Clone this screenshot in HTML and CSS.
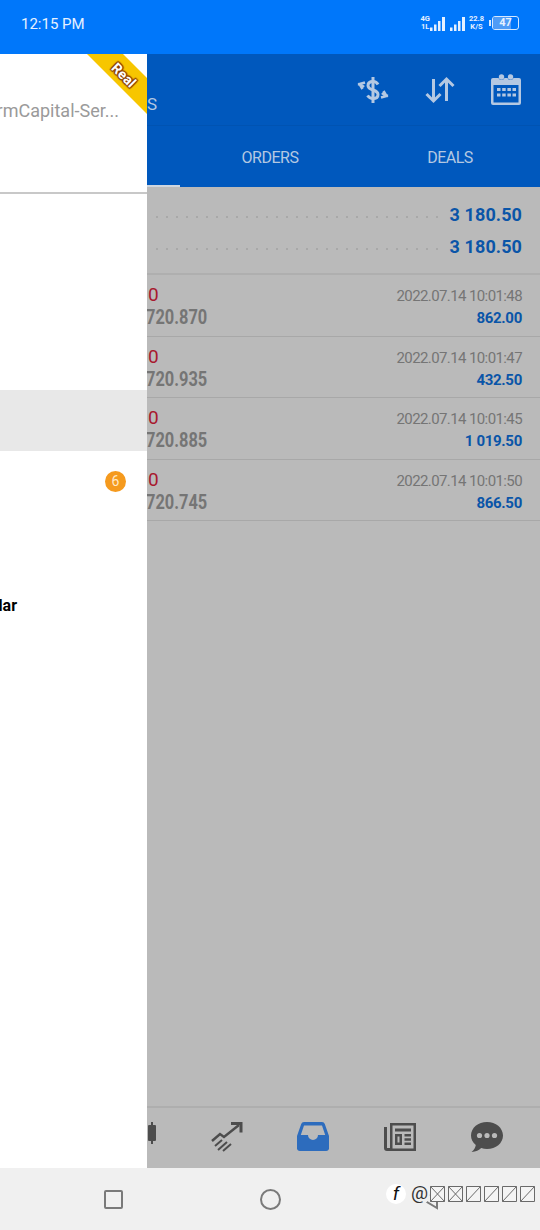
FILE: index.html
```html
<!DOCTYPE html>
<html lang="en">
<head>
    <meta charset="UTF-8">
    <meta name="viewport" content="width=device-width, initial-scale=1.0">
    <title>History</title>
    <link rel="stylesheet" href="styles.css">
</head>
<body>
    <div class="status-bar">
        <span class="clock">12:15 PM</span>
        <div class="status-icons">
            <div class="net-label"><span>4G</span><span>1L</span></div>
            <svg class="signal" width="15" height="15" viewBox="0 0 15 15"><path d="M0 11.500h2.500V15H0zM4 8.500h2.500V15H4zM8 5h2.500v10H8zM12 1h3v14h-3z"/></svg>
            <svg class="signal second" width="15" height="15" viewBox="0 0 15 15"><path d="M0 11.500h2.500V15H0zM4 8.500h2.500V15H4zM8 5h2.500v10H8zM12 1h3v14h-3z"/></svg>
            <div class="speed"><span>22.8</span><span>K/S</span></div>
            <span class="battery-nub"></span>
            <div class="battery"><span class="battery-fill"></span><span class="battery-text">47</span></div>
        </div>
    </div>

    <div class="screen">
        <!-- main page, the drawer lies over its left part -->
        <header class="app-header">
            <div class="toolbar">
                <span class="title">s</span>
                <div class="toolbar-icons">
                    <svg width="34" height="34" viewBox="0 0 34 34" fill="none" stroke="currentColor" stroke-width="3">
                        <path d="M22 11.500c-1-2-3-3-5-3-3 0-5 1.500-5 4s2 3.500 5 4.500 5 2 5 4.500-2 4-5 4-4.500-1.500-5.500-3"/>
                        <path d="M17 4v26"/>
                        <path d="M9 9.500 3.500 11l3 5M2 11c2 .500 4 1 6 3" stroke-width="2.500"/>
                        <path d="M25 24.500l5.500-1.500-3-5M32 23c-2-.500-4-1-6-3" stroke-width="2.500"/>
                    </svg>
                    <svg width="32" height="32" viewBox="0 0 32 32" fill="none" stroke="currentColor" stroke-width="3">
                        <path d="M9.500 5v22M2.500 20l7 7 7-7"/>
                        <path d="M22.500 27V5M15.500 12l7-7 7 7"/>
                    </svg>
                    <svg width="32" height="32" viewBox="0 0 32 32">
                        <path fill="currentColor" fill-rule="evenodd" d="M3 4h5.500a3.200 3.200 0 0 0 6 0h3a3.200 3.200 0 0 0 6 0H29a2 2 0 0 1 2 2v23a2 2 0 0 1-2 2H3a2 2 0 0 1-2-2V6a2 2 0 0 1 2-2zM3.500 11v17.500h25V11z"/>
                        <circle cx="11.500" cy="3" r="2.700" fill="currentColor"/>
                        <circle cx="20.500" cy="3" r="2.700" fill="currentColor"/>
                        <path fill="currentColor" d="M7 14h3.500v3H7zM12.200 14h3.500v3h-3.500zM17.400 14h3.500v3h-3.500zM22.500 14H26v3h-3.500zM7 19.500h3.500v3H7zM12.200 19.500h3.500v3h-3.500zM17.400 19.500h3.500v3h-3.500zM22.500 19.500H26v3h-3.500z"/>
                    </svg>
                </div>
            </div>
            <nav class="tabs">
                <a class="tab active">POSITIONS</a>
                <a class="tab">ORDERS</a>
                <a class="tab">DEALS</a>
            </nav>
        </header>

        <main class="content">
            <section class="summary">
                <div class="summary-row"><span class="dots"></span><span class="summary-value">3 180.50</span></div>
                <div class="summary-row"><span class="dots"></span><span class="summary-value">3 180.50</span></div>
            </section>

            <div class="deal">
                <div class="deal-left"><span class="deal-type">0</span><span class="deal-price">720.870</span></div>
                <div class="deal-right"><span class="deal-time">2022.07.14 10:01:48</span><span class="deal-profit">862.00</span></div>
            </div>
            <div class="deal">
                <div class="deal-left"><span class="deal-type">0</span><span class="deal-price">720.935</span></div>
                <div class="deal-right"><span class="deal-time">2022.07.14 10:01:47</span><span class="deal-profit">432.50</span></div>
            </div>
            <div class="deal">
                <div class="deal-left"><span class="deal-type">0</span><span class="deal-price">720.885</span></div>
                <div class="deal-right"><span class="deal-time">2022.07.14 10:01:45</span><span class="deal-profit">1 019.50</span></div>
            </div>
            <div class="deal">
                <div class="deal-left"><span class="deal-type">0</span><span class="deal-price">720.745</span></div>
                <div class="deal-right"><span class="deal-time">2022.07.14 10:01:50</span><span class="deal-profit">866.50</span></div>
            </div>
        </main>

        <footer class="bottom-tabs">
            <span class="bottom-tab"></span>
            <span class="bottom-tab">
                <svg class="candle" width="34" height="34" viewBox="0 0 34 34"><path d="M28 2h2v3h2a1 1 0 0 1 1 1v14a1 1 0 0 1-1 1h-2v3h-2v-3h-2a1 1 0 0 1-1-1V6a1 1 0 0 1 1-1h2z"/></svg>
            </span>
            <span class="bottom-tab">
                <svg width="34" height="34" viewBox="0 0 34 34" fill="none" stroke="currentColor" stroke-width="2.500">
                    <path d="M2 21l8-7 4 3L29 5"/>
                    <path d="M21 3.500h10v9" stroke-width="3"/>
                    <path d="M5 26l7-6M8 30l9-8M13 31l8-7" stroke-width="2"/>
                </svg>
            </span>
            <span class="bottom-tab selected">
                <svg width="34" height="32" viewBox="0 0 34 32">
                    <path fill="currentColor" fill-rule="evenodd" d="M8 1h18a3 3 0 0 1 2.800 2L33 15v13a3 3 0 0 1-3 2H4a3 3 0 0 1-3-2V15L5.200 3A3 3 0 0 1 8 1zm0 3.500L4.800 14H12a5 5 0 0 0 10 0h7.200L26 4.500z"/>
                </svg>
            </span>
            <span class="bottom-tab">
                <svg width="34" height="30" viewBox="0 0 34 30">
                    <path fill="currentColor" fill-rule="evenodd" d="M7 1h26v28H4a3 3 0 0 1-3-3V5h3v21h3zm2.500 2.500V26.500h21V3.500z"/>
                    <path fill="currentColor" fill-rule="evenodd" d="M12 6.500h16v3H12zM12 12h7v11h-7zm2.500 2.500v6h2v-6zM21.500 12H28v2.500h-6.500zM21.500 16.200H28v2.500h-6.500zM21.500 20.500H28V23h-6.500z"/>
                </svg>
            </span>
            <span class="bottom-tab">
                <svg width="34" height="32" viewBox="0 0 34 32">
                    <path fill="currentColor" d="M17 1c8.800 0 16 5.800 16 13.500S25.800 28 17 28c-2 0-4-.300-5.800-.900C9 29 6 31 1.500 31 4 29 5.500 26.500 5.800 24 2.800 21.500 1 18.200 1 14.500 1 6.800 8.200 1 17 1z"/>
                    <circle cx="9.500" cy="14.500" r="2.600" fill="#bababa"/>
                    <circle cx="17" cy="14.500" r="2.600" fill="#bababa"/>
                    <circle cx="24.500" cy="14.500" r="2.600" fill="#bababa"/>
                </svg>
            </span>
        </footer>

        <!-- side drawer, only its right part is on screen -->
        <aside class="drawer">
            <div class="drawer-inner">
                <div class="drawer-head">
                    <span class="account">ForexTimeFirmCapital-Ser...</span>
                </div>
                <ul class="menu">
                    <li class="menu-item"></li>
                    <li class="menu-item"></li>
                    <li class="menu-item"></li>
                    <li class="menu-item current"></li>
                    <li class="menu-item"><span class="badge">6</span></li>
                    <li class="menu-item"></li>
                    <li class="menu-item label"><span>Economic Calendar</span></li>
                </ul>
            </div>
            <div class="ribbon">
                <svg width="60" height="62" viewBox="0 0 60 62"><polygon points="0,0 36,0 60,24 60,60"/></svg>
                <span class="ribbon-text">Real</span>
            </div>
        </aside>
    </div>

    <div class="nav-bar">
        <span class="nav-square"></span>
        <span class="nav-circle"></span>
        <svg class="nav-back" width="20" height="22" viewBox="0 0 20 22" fill="none"><path d="M18 2 3 11l15 9z"/></svg>
        <div class="watermark">
            <span class="wm-logo">f</span>
            <span class="wm-at">@</span>
            <div class="wm-boxes">
                <svg width="15" height="16" viewBox="0 0 15 16"><path d="M.5.500h14v15H.5zM.5.500l14 15M14.500.500l-14 15"/></svg>
                <svg width="15" height="16" viewBox="0 0 15 16"><path d="M.5.500h14v15H.5zM.5.500l14 15M14.500.500l-14 15"/></svg>
                <svg width="15" height="16" viewBox="0 0 15 16"><path d="M.5.500h14v15H.5zM14.500.500l-14 15"/></svg>
                <svg width="15" height="16" viewBox="0 0 15 16"><path d="M.5.500h14v15H.5zM14.500.500l-14 15"/></svg>
                <svg width="15" height="16" viewBox="0 0 15 16"><path d="M.5.500h14v15H.5zM14.500.500l-14 15"/></svg>
                <svg width="15" height="16" viewBox="0 0 15 16"><path d="M.5.500h14v15H.5zM14.500.500l-14 15"/></svg>
            </div>
        </div>
    </div>
</body>
</html>
```

FILE: styles.css
```css
* {
    box-sizing: border-box;
}

body {
    margin: 0;
    width: 540px;
    height: 1230px;
    display: flex;
    flex-direction: column;
    overflow: hidden;
    font-family: Roboto, "Liberation Sans", sans-serif;
    background: #f0f0f0;
}

/* Status bar */
.status-bar {
    height: 54px;
    flex: none;
    display: flex;
    align-items: center;
    justify-content: space-between;
    padding: 0 21px 8px;
    background: #0077fa;
    color: #e6f1ff;
}

.clock {
    font-size: 15px;
    margin-top: 2px;
}

.status-icons {
    display: flex;
    align-items: center;
}

.net-label, .speed {
    display: flex;
    flex-direction: column;
    align-items: center;
    font-size: 7.500px;
    font-weight: 700;
    line-height: 8px;
}

.signal {
    fill: #e6f1ff;
    margin-left: 0;
}

.signal.second {
    margin-left: 5px;
}

.speed {
    margin-left: 4px;
}

.battery-nub {
    width: 2px;
    height: 6px;
    margin-left: 5px;
    background: #d5e8ff;
}

.battery {
    position: relative;
    width: 27px;
    height: 14px;
    margin-left: 1px;
    border: 1px solid #d5e8ff;
    border-radius: 3px;
    overflow: hidden;
}

.battery-fill {
    position: absolute;
    left: 0;
    top: 0;
    bottom: 0;
    width: 70%;
    background: #4f9cf6;
}

.battery-text {
    position: absolute;
    inset: 0;
    text-align: center;
    font-size: 11px;
    font-weight: 700;
    line-height: 12px;
}

/* Screen */
.screen {
    position: relative;
    height: 1114px;
    flex: none;
    display: flex;
    flex-direction: column;
    background: #bababa;
    overflow: hidden;
}

.app-header {
    flex: none;
    background: #0058bd;
    color: #b4c8e2;
}

.toolbar {
    height: 72px;
    display: flex;
    align-items: center;
    justify-content: space-between;
    padding: 0 18px 0 147px;
    border-bottom: 1px solid #0053b2;
}

.title {
    margin-top: 29px;
    text-transform: uppercase;
    font-size: 17px;
}

.toolbar-icons {
    display: flex;
    gap: 34px;
    align-items: center;
    margin-top: 1px;
}

.tabs {
    height: 61px;
    display: flex;
}

.tab {
    flex: 1;
    display: flex;
    align-items: center;
    justify-content: center;
    padding-top: 4px;
    font-size: 16px;
    letter-spacing: -0.5px;
    border-bottom: 2px solid transparent;
}

.tab.active {
    border-bottom-color: #cfd6df;
}

/* Content */
.content {
    flex: 1;
}

.summary {
    padding: 11px 18px 11px 155px;
    border-bottom: 2px solid #afafaf;
}

.summary-row {
    height: 32px;
    display: flex;
    align-items: center;
}

/* dotted leader, wider spacing than border: dotted gives */
.dots {
    flex: 1;
    height: 2px;
    margin: 5px 10px 0 0;
    background: radial-gradient(circle, #a8a8a8 1px, transparent 1.200px) -3px 0 / 10px 2px repeat-x;
}

.summary-value {
    font-size: 18px;
    font-weight: 700;
    letter-spacing: 0.1px;
    color: #0a55a8;
}

.deal {
    height: 61.500px;
    display: flex;
    justify-content: space-between;
    padding: 9px 18px 0 146px;
    border-bottom: 1px solid #a8a8a8;
}

.deal-left, .deal-right {
    display: flex;
    flex-direction: column;
}

.deal-right {
    align-items: flex-end;
}

.deal-type {
    font-size: 19px;
    line-height: 22px;
    color: #a8182e;
    padding-left: 2px;
}

.deal-price {
    font-size: 20px;
    line-height: 23px;
    font-weight: 700;
    color: #757575;
    transform: scaleX(0.82);
    transform-origin: left;
}

.deal-time {
    font-size: 15px;
    line-height: 24px;
    letter-spacing: -0.6px;
    color: #757575;
}

.deal-profit {
    font-size: 15px;
    line-height: 20px;
    font-weight: 700;
    letter-spacing: -0.3px;
    color: #0a55a8;
}

/* Bottom tabs */
.bottom-tabs {
    height: 62px;
    flex: none;
    display: flex;
    padding: 0 10px;
    border-top: 2px solid #aeaeae;
}

.bottom-tab {
    flex: 1;
    display: flex;
    align-items: center;
    justify-content: center;
    padding-bottom: 2px;
    color: #4d4d4d;
}

.bottom-tab.selected {
    color: #2d6cbd;
}

.candle {
    fill: #4d4d4d;
}

/* Drawer */
.drawer {
    position: absolute;
    left: 0;
    top: 0;
    bottom: 0;
    width: 147px;
    background: #fff;
    overflow: hidden;
}

.drawer-inner {
    width: 400px;
    margin-left: -253px;
}

.drawer-head {
    height: 140px;
    padding: 46px 28px 0 0;
    text-align: right;
    border-bottom: 2px solid #c8c8c8;
}

.account {
    font-size: 18px;
    color: #9a9a9a;
    white-space: nowrap;
}

.menu {
    list-style: none;
    margin: 0;
    padding: 11px 0 0;
}

.menu-item {
    position: relative;
    height: 61.500px;
    display: flex;
    align-items: center;
}

.menu-item.current {
    background: #e8e8e8;
}

.menu-item.label {
    justify-content: flex-end;
    padding: 2px 130px 0 0;
    font-size: 16px;
    font-weight: 700;
    color: #000;
}

.badge {
    position: absolute;
    right: 21px;
    top: 20px;
    width: 21px;
    height: 21px;
    border-radius: 50%;
    background: #f59a1e;
    color: #ffe9c9;
    font-size: 14px;
    line-height: 21px;
    text-align: center;
}

.ribbon {
    position: absolute;
    right: 0;
    top: 0;
    width: 60px;
    height: 62px;
}

.ribbon svg {
    fill: #f7c600;
    display: block;
}

.ribbon-text {
    position: absolute;
    left: 23px;
    top: 13px;
    transform: rotate(45deg);
    font-size: 14px;
    font-weight: 700;
    color: #fff;
    text-shadow: 0 0 2px #8a3c00, 1px 1px 1px #8a3c00, -1px -1px 1px #8a3c00, 1px -1px 1px #8a3c00, -1px 1px 1px #8a3c00;
}

/* Navigation bar */
.nav-bar {
    position: relative;
    height: 62px;
    flex: none;
    display: flex;
    align-items: center;
    padding: 0 0 0 104px;
    background: #f0f0f0;
}

.nav-square {
    width: 19px;
    height: 19px;
    border: 2px solid #7a7a7a;
    border-radius: 2px;
}

.nav-circle {
    width: 21px;
    height: 21px;
    margin-left: 137px;
    border: 2px solid #7a7a7a;
    border-radius: 50%;
}

.nav-back {
    margin-left: 138px;
    stroke: #7a7a7a;
    stroke-width: 2;
}

.watermark {
    position: absolute;
    left: 386px;
    top: 10px;
    width: 150px;
    height: 32px;
    display: flex;
    align-items: center;
}

.wm-logo {
    width: 20px;
    height: 20px;
    margin-right: 3px;
    border-radius: 50%;
    background: #fff;
    color: #111;
    font-size: 19px;
    font-style: italic;
    line-height: 20px;
    text-align: center;
}

.wm-at {
    width: 21px;
    height: 22px;
    border-radius: 50%;
    background: #f0f0f0;
    font-size: 19px;
    line-height: 20px;
    text-align: center;
    color: #333;
}

.wm-boxes {
    display: flex;
    gap: 3px;
    background: #f0f0f0;
}

.wm-boxes svg {
    fill: #f4f4f4;
    stroke: #6a6a6a;
    stroke-width: 1;
}
```
